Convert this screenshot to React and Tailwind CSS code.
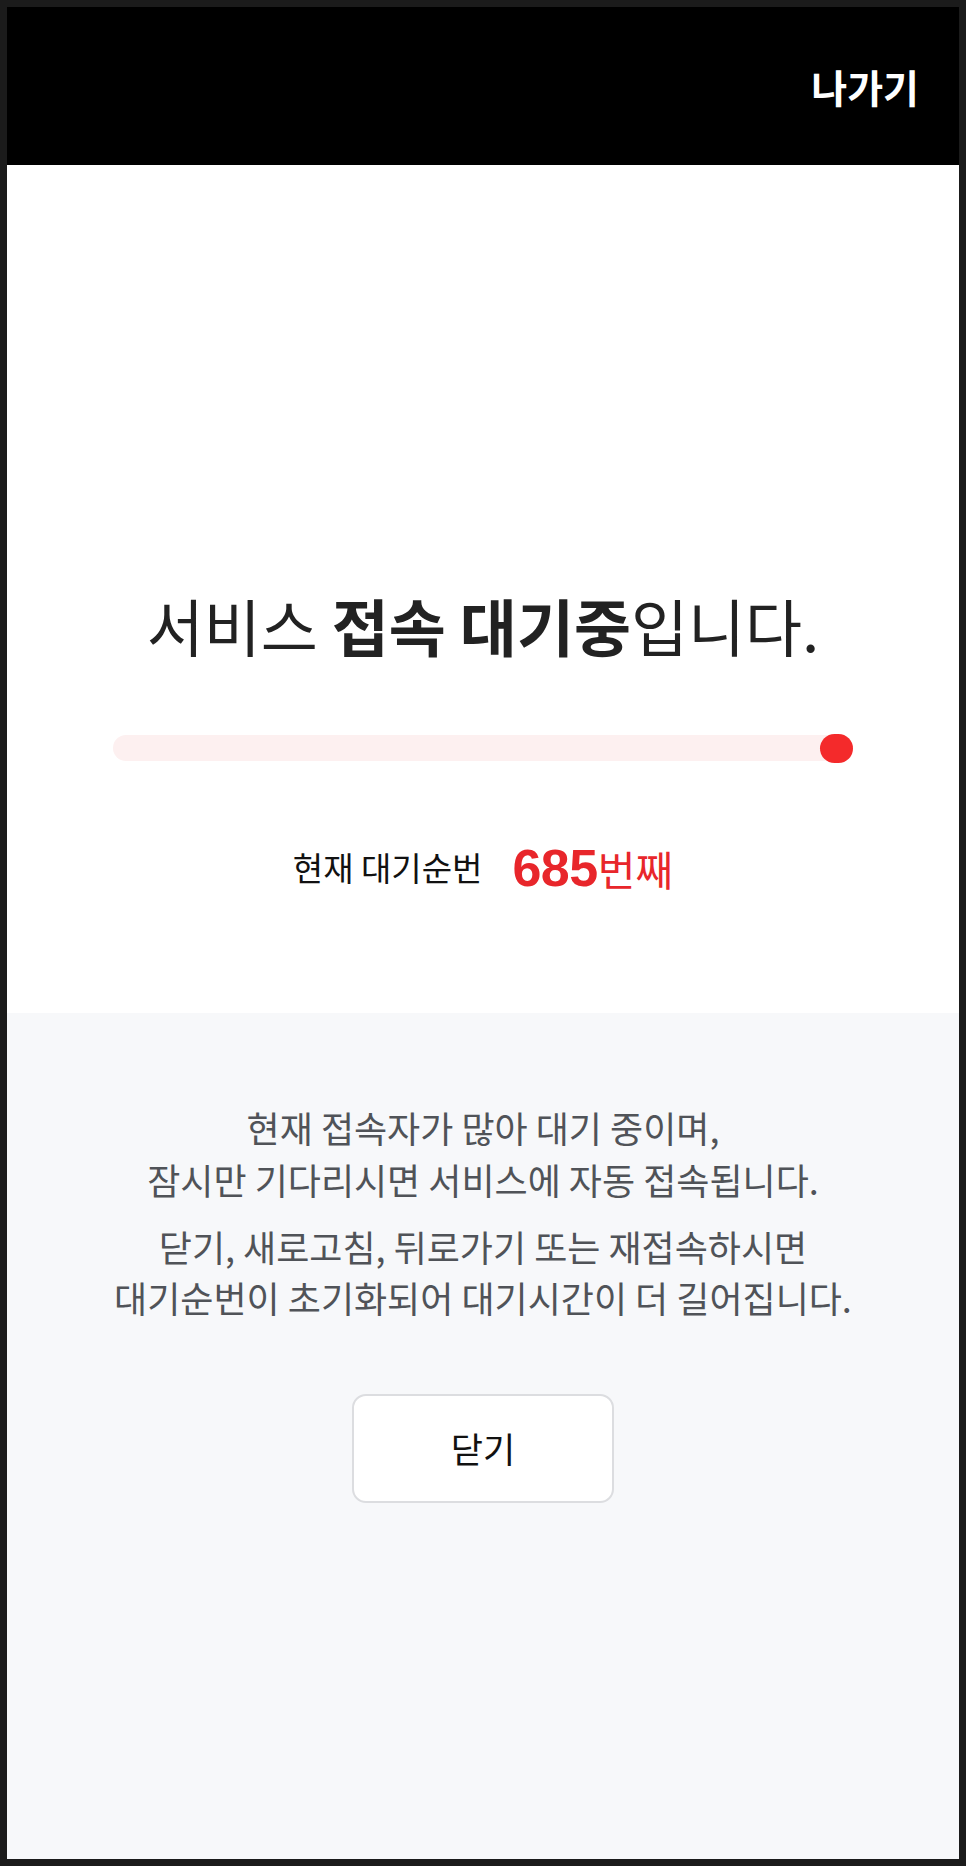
import React from 'react';

const font = { fontFamily: '"Noto Sans CJK KR", "Noto Sans", sans-serif' };

export default function App() {
  return (
    <div className="min-h-[1866px] bg-[#1b1b1b] p-[7px]" style={font}>
      <div className="flex min-h-[1852px] flex-col bg-white">
        <header className="flex h-[158px] items-center justify-end bg-black pr-[40px]">
          <button className="text-[39px] font-bold leading-none text-white">나가기</button>
        </header>

        <section className="flex h-[848px] flex-col items-center pt-[425px]">
          <h1 className="text-[62px] leading-[70px] text-[#222]">
            서비스 <b className="font-bold">접속 대기중</b>입니다.
          </h1>
          <div className="mt-[75px] flex h-[26px] w-[740px] items-center justify-end rounded-full bg-[#fdf0f0]">
            <div className="h-[29px] w-[33px] rounded-full bg-[#f42a2b]" />
          </div>
          <div className="mt-[77px] flex h-[60px] items-center">
            <span className="text-[33px] text-[#111]">현재 대기순번</span>
            <span className="ml-[30px] flex items-baseline text-[#e8262b]">
              <b className="font-['Liberation_Sans',sans-serif] text-[52px] font-bold tracking-[-0.5px]">685</b>
              <span className="text-[41px]">번째</span>
            </span>
          </div>
        </section>

        <section className="flex flex-1 flex-col items-center bg-[#f7f8fa] pt-[88px] text-center">
          <p className="text-[36px] leading-[52px] text-[#505358]">
            현재 접속자가 많아 대기 중이며,
            <br />
            잠시만 기다리시면 서비스에 자동 접속됩니다.
          </p>
          <p className="mt-[16px] text-[36px] leading-[51px] text-[#505358]">
            닫기, 새로고침, 뒤로가기 또는 재접속하시면
            <br />
            대기순번이 초기화되어 대기시간이 더 길어집니다.
          </p>
          <button className="mt-[71px] flex h-[109px] w-[262px] items-center justify-center rounded-[14px] border-2 border-[#dcdde0] bg-white text-[35px] text-[#111]">
            닫기
          </button>
        </section>
      </div>
    </div>
  );
}
